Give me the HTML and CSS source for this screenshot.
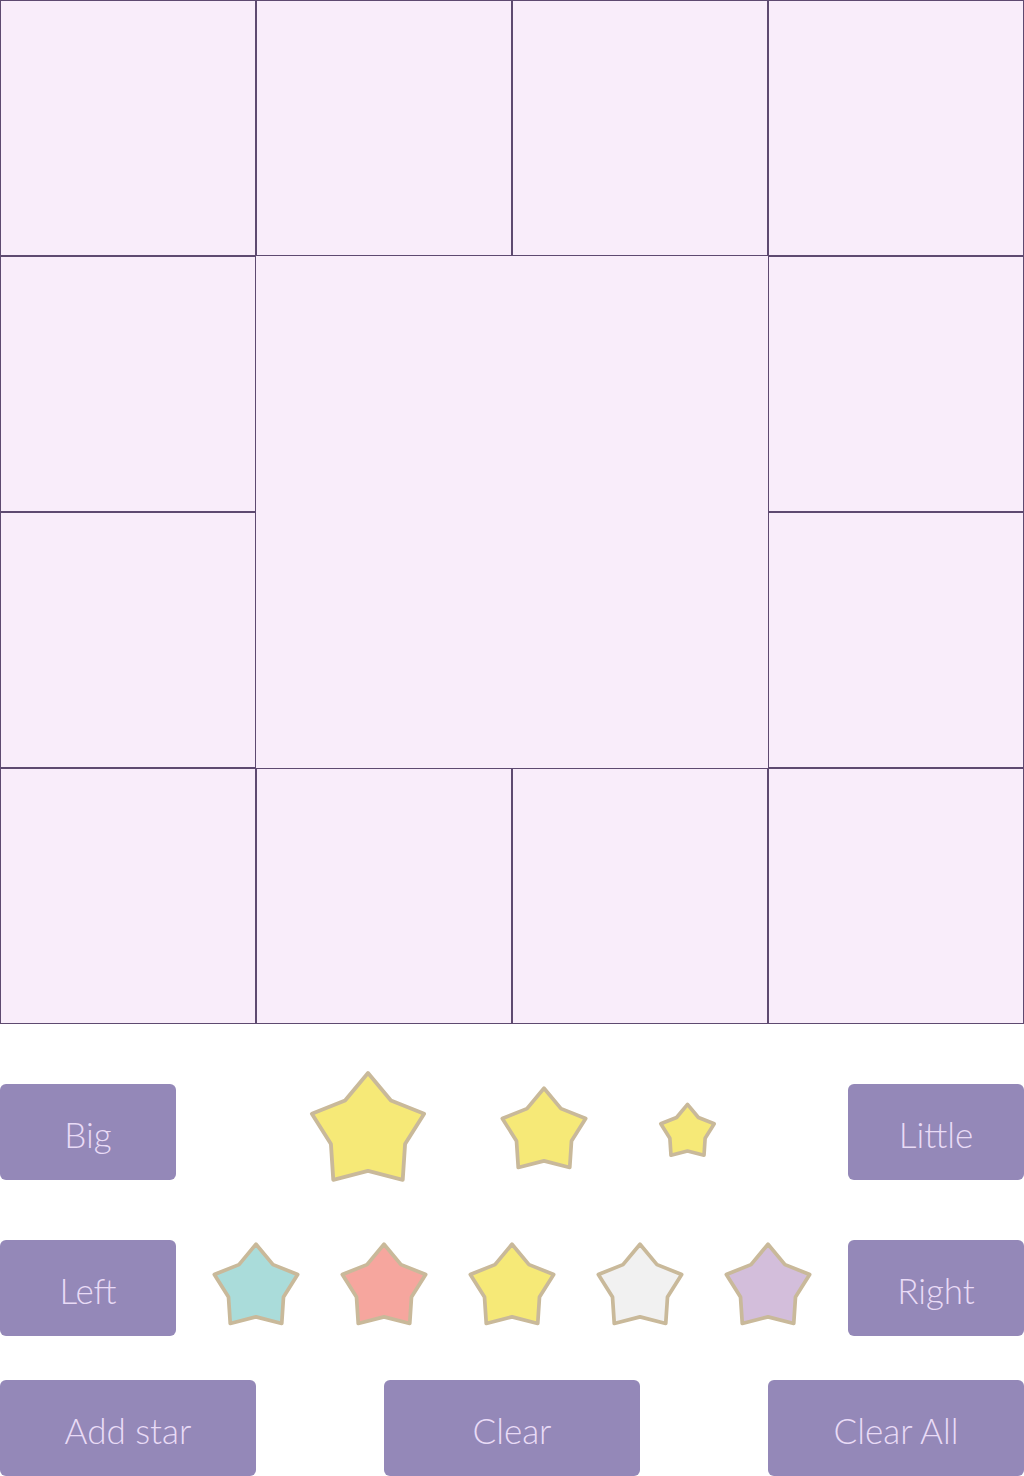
FILE: index.html
```html
<!DOCTYPE html>
<html>
<head>
<meta charset="utf-8">
<link rel="stylesheet" href="styles.css">
</head>
<body>
<svg class="defs" width="0" height="0">
  <defs>
    <polygon id="star" points="0,-1 0.3880,-0.5340 0.9511,-0.309 0.6277,0.2040 0.5878,0.809 0,0.66 -0.5878,0.809 -0.6277,0.2040 -0.9511,-0.309 -0.3880,-0.5340"/>
  </defs>
</svg>
<div class="board">
  <div class="cell"></div>
  <div class="cell"></div>
  <div class="cell"></div>
  <div class="cell"></div>
  <div class="cell"></div>
  <div class="cell center"></div>
  <div class="cell"></div>
  <div class="cell"></div>
  <div class="cell"></div>
  <div class="cell"></div>
  <div class="cell"></div>
  <div class="cell"></div>
  <div class="cell"></div>
</div>

<div class="controls">
  <div class="row row-size">
    <button class="btn">Big</button>
    <svg class="star s-big yellow" viewBox="-1.05 -1.05 2.1 2.1"><use href="#star"/></svg>
    <svg class="star s-mid yellow" viewBox="-1.05 -1.05 2.1 2.1"><use href="#star"/></svg>
    <svg class="star s-small yellow" viewBox="-1.05 -1.05 2.1 2.1"><use href="#star"/></svg>
    <button class="btn push">Little</button>
  </div>
  <div class="row row-color">
    <button class="btn">Left</button>
    <svg class="star s-mid teal" viewBox="-1.05 -1.05 2.1 2.1"><use href="#star"/></svg>
    <svg class="star s-mid salmon" viewBox="-1.05 -1.05 2.1 2.1"><use href="#star"/></svg>
    <svg class="star s-mid yellow" viewBox="-1.05 -1.05 2.1 2.1"><use href="#star"/></svg>
    <svg class="star s-mid white" viewBox="-1.05 -1.05 2.1 2.1"><use href="#star"/></svg>
    <svg class="star s-mid lilac" viewBox="-1.05 -1.05 2.1 2.1"><use href="#star"/></svg>
    <button class="btn push">Right</button>
  </div>
  <div class="row row-actions">
    <button class="btn wide">Add star</button>
    <button class="btn wide">Clear</button>
    <button class="btn wide">Clear All</button>
  </div>
</div>
</body>
</html>
```

FILE: styles.css
```css
html, body {
  margin: 0;
  padding: 0;
  background: #ffffff;
}

body {
  width: 1024px;
  height: 1476px;
  overflow: hidden;
  font-family: "Lato", "Open Sans", sans-serif;
}

.defs {
  position: absolute;
  width: 0;
  height: 0;
}

.board {
  display: grid;
  grid-template-columns: repeat(4, 256px);
  grid-template-rows: repeat(4, 256px);
  width: 1024px;
}

.cell {
  box-sizing: border-box;
  border: 1px solid #5e4a70;
  background: #f9edfa;
}

.cell.center {
  grid-column: 2 / 4;
  grid-row: 2 / 4;
  border: none;
}

.controls {
  padding-top: 60px;
}

.row {
  display: flex;
  align-items: center;
}

.row-size {
  height: 96px;
}

.row-color {
  height: 96px;
  margin-top: 60px;
}

.row-actions {
  height: 96px;
  margin-top: 44px;
  justify-content: space-between;
}

.btn {
  box-sizing: border-box;
  width: 176px;
  height: 96px;
  border: none;
  border-radius: 6px;
  background: #9488b8;
  color: #e9dbf6;
  font-family: "Lato", "Open Sans", sans-serif;
  font-weight: 300;
  font-size: 35px;
  padding: 4px 0 0 0;
  margin: 0;
  flex: none;
}

.btn.wide {
  width: 256px;
}

.btn.push {
  margin-left: auto;
}

.star {
  flex: none;
  overflow: visible;
}

.star use {
  stroke: #c9b99a;
  stroke-linejoin: round;
}

.s-big {
  width: 124px;
  height: 124px;
}

.s-big use {
  stroke-width: 0.065;
}

.s-mid {
  width: 92px;
  height: 92px;
}

.s-mid use {
  stroke-width: 0.085;
}

.s-small {
  width: 59px;
  height: 59px;
}

.s-small use {
  stroke-width: 0.13;
}

.row-size .s-big {
  margin-left: 130px;
}

.row-size .s-mid {
  margin-left: 68px;
}

.row-size .s-small {
  margin-left: 68px;
}

.row-color .s-mid {
  margin-left: 36px;
}

.row-color .s-mid:first-of-type {
  margin-left: 34px;
}

.yellow use { fill: #f6e977; }
.teal use { fill: #aadcda; }
.salmon use { fill: #f6a69e; }
.white use { fill: #f1f1f1; }
.lilac use { fill: #d3bedb; }
```
